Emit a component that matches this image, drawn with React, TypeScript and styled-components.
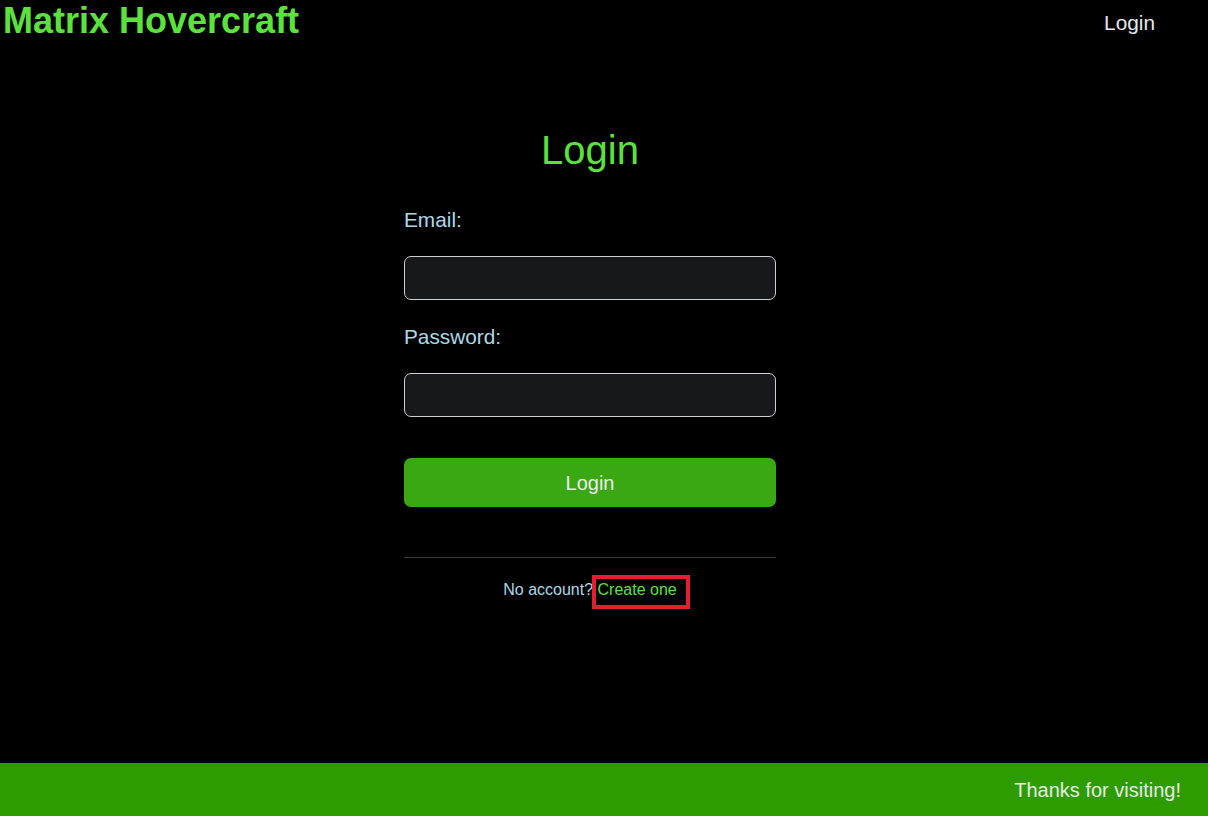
import React from "react";
import styled, { createGlobalStyle } from "styled-components";

const GlobalStyle = createGlobalStyle`
  html, body {
    margin: 0;
    padding: 0;
    background: #000;
    font-family: "Liberation Sans", Arial, sans-serif;
  }
  * { box-sizing: border-box; }
`;

const Page = styled.div`
  min-height: 100vh;
  display: flex;
  flex-direction: column;
  background: #000;
`;

const Header = styled.header`
  display: flex;
  justify-content: space-between;
  align-items: flex-start;
  height: 41px;
`;

const Brand = styled.h1`
  margin: 0;
  padding-left: 3px;
  font-size: 36px;
  line-height: 41px;
  font-weight: 700;
  color: #5ce23c;
`;

const NavLink = styled.a`
  margin: 11px 53px 0 0;
  font-size: 20.8px;
  line-height: 24px;
  color: #e4e8ec;
  text-decoration: none;
`;

const Main = styled.main`
  flex: 1;
  display: flex;
  flex-direction: column;
  align-items: center;
  padding: 86px 28px 0 0;
`;

const Heading = styled.h2`
  margin: 0 0 35px;
  font-size: 40px;
  line-height: 46px;
  font-weight: 400;
  color: #5ce23c;
`;

const Form = styled.form`
  width: 372px;
  display: flex;
  flex-direction: column;
`;

const Label = styled.label`
  display: block;
  font-size: 20.8px;
  line-height: 24px;
  color: #add8e6;
  margin-bottom: 24px;
`;

const Input = styled.input`
  height: 44px;
  width: 100%;
  margin: 0 0 25px;
  border: 1px solid #cfcfcf;
  border-radius: 7px;
  background: #17181b;
  color: #fff;
  font-size: 16px;
  padding: 0 10px;
`;

const SubmitButton = styled.button`
  margin-top: 16px;
  height: 49px;
  width: 100%;
  border: none;
  border-radius: 7px;
  background: #3aa813;
  color: #e8eeea;
  font-family: "Liberation Sans", Arial, sans-serif;
  font-size: 20px;
  line-height: 24px;
  cursor: pointer;
`;

const Divider = styled.hr`
  margin: 50px 0 0;
  border: none;
  height: 1px;
  background: #3a3a3a;
`;

const SignupText = styled.p`
  margin: 23px 0 0;
  text-align: center;
  font-size: 16px;
  line-height: 18px;
  color: #add8e6;
`;

const CreateLink = styled.a`
  display: inline-block;
  color: #5ce23c;
  text-decoration: none;
  padding: 2px 9px 6px 2px;
  margin: -2px -9px 0 -2px;
  outline: 4px solid #e41e2c;
`;

const Footer = styled.footer`
  height: 53px;
  background: #2e9c00;
  display: flex;
  align-items: center;
  justify-content: flex-end;
  padding-right: 27px;
  font-size: 20px;
  line-height: 24px;
  color: #e6ece6;
`;

export default function App() {
  return (
    <Page>
      <GlobalStyle />
      <Header>
        <Brand>Matrix Hovercraft</Brand>
        <NavLink href="#">Login</NavLink>
      </Header>
      <Main>
        <Heading>Login</Heading>
        <Form onSubmit={(e) => e.preventDefault()}>
          <Label htmlFor="email">Email:</Label>
          <Input id="email" type="email" />
          <Label htmlFor="password">Password:</Label>
          <Input id="password" type="password" />
          <SubmitButton type="submit">Login</SubmitButton>
          <Divider />
          <SignupText>
            No account? <CreateLink href="#">Create one</CreateLink>
          </SignupText>
        </Form>
      </Main>
      <Footer>Thanks for visiting!</Footer>
    </Page>
  );
}
